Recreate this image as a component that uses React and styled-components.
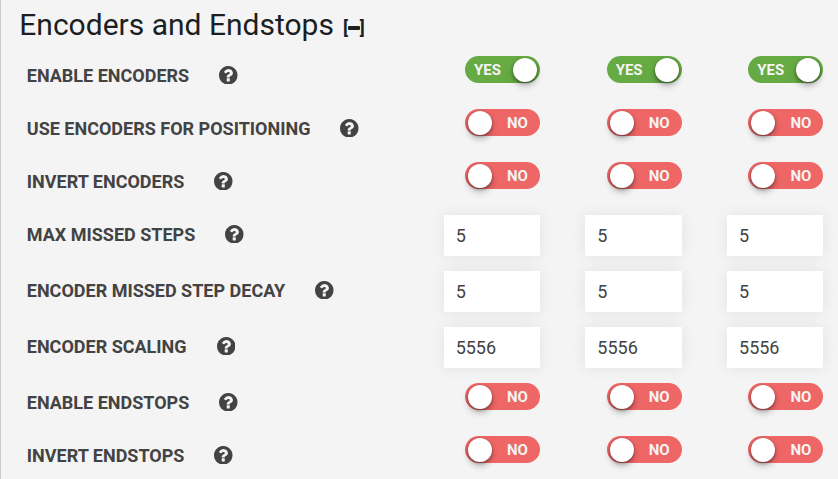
import React from "react";
import styled, { createGlobalStyle } from "styled-components";

const GlobalStyle = createGlobalStyle`
  * { box-sizing: border-box; }
  body {
    margin: 0;
    background: #f4f4f4;
    font-family: Roboto, sans-serif;
    color: #434343;
    overflow: hidden;
  }
`;

const Panel = styled.main`
  height: 479px;
  padding: 5px 14.7px 0 18.3px;
  border-left: 1px solid #ccc;
  background: #f4f4f4;
  overflow: hidden;
`;

const Header = styled.header`
  display: flex;
  align-items: flex-start;
  height: 51px;
  color: #1b1f24;
  white-space: nowrap;
`;

const Title = styled.h1`
  margin: 0;
  font-size: 30px;
  line-height: 40px;
  font-weight: 400;
`;

const Collapse = styled.button`
  display: flex;
  align-items: center;
  margin: 13px 0 0 9px;
  padding: 0;
  border: 0;
  background: none;
  color: inherit;
  font: 700 18px/20px Roboto, sans-serif;
`;

const Minus = styled.span`
  width: 12px;
  height: 4px;
  margin: 0;
  border-radius: 1px;
  background: currentColor;
`;

const Row = styled.div`
  display: grid;
  grid-template-columns: 1fr repeat(3, 96.3px);
  column-gap: 45.4px;
  align-items: start;
  height: ${({ $tall }) => ($tall ? 56 : 53)}px;
`;

const LabelCell = styled.div`
  display: flex;
  align-items: center;
  gap: 30px;
  height: 39px;
  padding-left: 7.5px;
  white-space: nowrap;
`;

const Label = styled.label`
  font-size: 18px;
  line-height: 22px;
  font-weight: 700;
  text-transform: uppercase;
`;

const HelpIcon = styled.svg`
  width: 18.5px;
  height: 18.5px;
  flex: none;
  fill: #434343;
  margin-top: -1.5px;
`;

const Track = styled.button`
  display: flex;
  flex-direction: ${({ $on }) => ($on ? "row" : "row-reverse")};
  align-items: center;
  justify-content: space-between;
  justify-self: end;
  width: 75px;
  height: 27px;
  padding: ${({ $on }) => ($on ? "0 3px 0 9px" : "0 12px 0 3px")};
  border: 0;
  border-radius: 14px;
  background: ${({ $on }) => ($on ? "#66aa44" : "#ee6666")};
  color: #f4f4f4;
  font: 700 15px/18px Roboto, sans-serif;
`;

const ToggleText = styled.span`
  padding-top: 1px;
`;

const Knob = styled.span`
  width: 24px;
  height: 24px;
  border-radius: 50%;
  background: #fff;
  box-shadow: 0 4px 6px rgba(0, 0, 0, 0.25), 0 1px 3px rgba(0, 0, 0, 0.4);
`;

const NumberInput = styled.input`
  width: 100%;
  height: 41px;
  padding: 0 12px;
  border: 0;
  border-radius: 0;
  outline: 0;
  background: #fff;
  color: #434343;
  font: 400 18px Roboto, sans-serif;
  box-shadow: 0 0 15px rgba(0, 0, 0, 0.08);
`;

const rows = [
  { label: "Enable Encoders", on: true },
  { label: "Use Encoders for Positioning", on: false },
  { label: "Invert Encoders", on: false },
  { label: "Max Missed Steps", value: "5" },
  { label: "Encoder Missed Step Decay", value: "5" },
  { label: "Encoder Scaling", value: "5556" },
  { label: "Enable Endstops", on: false },
  { label: "Invert Endstops", on: false },
];

const axes = ["x", "y", "z"];

function Help() {
  return (
    <HelpIcon viewBox="128 128 1536 1536" aria-hidden="true">
      <path d="M1024 1376v-192q0-14-9-23t-23-9h-192q-14 0-23 9t-9 23v192q0 14 9 23t23 9h192q14 0 23-9t9-23zm256-672q0-88-55.5-163t-138.5-116-170-41q-243 0-371 213-15 24 8 42l132 100q7 6 19 6 16 0 25-12 53-68 86-92 34-24 86-24 48 0 85.5 26t37.5 59q0 38-20 61t-68 45q-63 28-115.5 86.5t-52.5 125.5v36q0 14 9 23t23 9h192q14 0 23-9t9-23q0-19 21.5-49.5t54.5-49.5q32-18 49-28.5t46-35 44.5-48 28-60.5 12.5-81zm384 192q0 209-103 385.5t-279.5 279.5-385.5 103-385.5-103-279.5-279.5-103-385.5 103-385.5 279.5-279.5 385.5-103 385.5 103 279.5 279.5 103 385.5z" />
    </HelpIcon>
  );
}

function Toggle({ on }) {
  return (
    <Track $on={on} role="switch" aria-checked={on}>
      <ToggleText>{on ? "YES" : "NO"}</ToggleText>
      <Knob />
    </Track>
  );
}

export default function App() {
  return (
    <>
      <GlobalStyle />
      <Panel>
        <Header>
          <Title>Encoders and Endstops</Title>
          <Collapse aria-label="Collapse section">
            <span>[</span>
            <Minus />
            <span>]</span>
          </Collapse>
        </Header>
        {rows.map(({ label, on, value }) => (
          <Row key={label} $tall={value !== undefined}>
            <LabelCell>
              <Label>{label}</Label>
              <Help />
            </LabelCell>
            {axes.map((axis) =>
              value !== undefined ? (
                <NumberInput key={axis} defaultValue={value} aria-label={`${label} ${axis}`} />
              ) : (
                <Toggle key={axis} on={on} />
              )
            )}
          </Row>
        ))}
      </Panel>
    </>
  );
}
